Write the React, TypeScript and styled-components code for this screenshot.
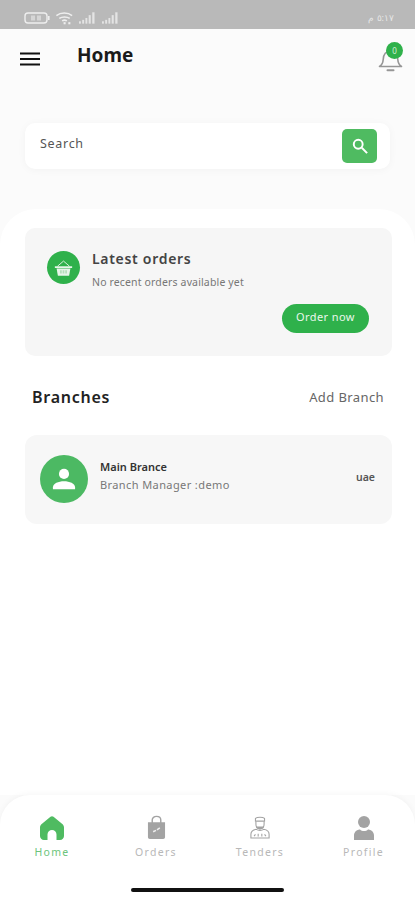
import styled, { createGlobalStyle } from "styled-components";

const GlobalStyle = createGlobalStyle`
  html, body {
    margin: 0;
    padding: 0;
    background: #fbfbfb;
    font-family: "Noto Sans", "Liberation Sans", sans-serif;
  }

  * {
    box-sizing: border-box;
  }
`;

const BatteryIcon = () => (
  <svg width="26" height="14" viewBox="0 0 26 14" fill="none">
    <rect x="1" y="2" width="22" height="10" rx="3" stroke="#eee" strokeWidth="1.4" />
    <rect x="24" y="5" width="1.6" height="4" fill="#eee" />
    <rect x="7" y="4.5" width="4" height="5" fill="#d6d6d6" />
    <rect x="13" y="4.5" width="4" height="5" fill="#d6d6d6" />
  </svg>
);

const WifiIcon = () => (
  <svg width="19" height="14" viewBox="0 0 20 14" fill="none" stroke="#eee" strokeWidth="1.6">
    <path d="M1.5 4.5C6 .8 13.5 .8 18 4.5" />
    <path d="M4.5 7.5c3-2.2 8-2.2 11 0" />
    <path d="M7.5 10c1.5-.9 3.500-.9 5 0" />
    <rect x="9" y="11.4" width="2.2" height="2.2" fill="#eee" stroke="none" />
    <rect x="14" y="11.4" width="2.2" height="2.2" fill="#eee" stroke="none" />
  </svg>
);

const SignalIcon = () => (
  <svg width="18" height="13" viewBox="0 0 19 13" fill="#e4e4e4">
    <rect x="0" y="10.5" width="2" height="2.5" />
    <rect x="3.4" y="9" width="2" height="4" />
    <rect x="6.8" y="7" width="2" height="6" />
    <rect x="10.2" y="4" width="2.2" height="9" />
    <rect x="14" y="1" width="2.4" height="12" />
  </svg>
);

const MenuIcon = () => (
  <svg width="20" height="14" viewBox="0 0 20 14" fill="none" stroke="#111" strokeWidth="2">
    <path d="M0 1.5h20M0 7h20M0 12.500h20" />
  </svg>
);

const BellIcon = () => (
  <svg width="25" height="26" viewBox="0 0 25 26" fill="none" stroke="#969696" strokeWidth="1.600">
    <path d="M1.500 20.500c2.500-1.700 3.500-3.600 3.700-7 .2-5 3-8.500 7.300-8.500s7.100 3.500 7.300 8.500c.2 3.400 1.200 5.300 3.700 7z" strokeLinejoin="round" />
    <path d="M9.500 24.200h6" strokeLinecap="round" strokeWidth="2" />
  </svg>
);

const SearchIcon = () => (
  <svg width="16" height="16" viewBox="0 0 18 18" fill="none" stroke="#fff" strokeWidth="2.200">
    <circle cx="7" cy="7" r="5" />
    <path d="M11 11l6 6" />
  </svg>
);

const BasketIcon = () => (
  <svg width="19" height="18" viewBox="0 0 22 20" fill="none">
    <path d="M4 8l7-6 7 6" stroke="#dff1e2" strokeWidth="1.100" />
    <path d="M1 8h20v2H1z" fill="#e8f5ea" />
    <path d="M3 10.500h16L17.500 19h-13z" fill="#e8f5ea" />
    <path d="M7 12.500h2v4H7zM10 12.500h2v4h-2zM13 12.500h2v4h-2z" fill="#b5dfbc" />
  </svg>
);

const PersonIcon = () => (
  <svg width="24" height="26" viewBox="0 0 26 26" fill="#fff">
    <circle cx="13" cy="7.500" r="5.500" />
    <path d="M1 24v-2C1 18 7 15.500 13 15.500S25 18 25 22v2z" />
  </svg>
);

const HomeIcon = () => (
  <svg width="24" height="24" viewBox="0 0 24 24" fill="#4fbb61">
    <path d="M10.500.7c.9-.7 2.100-.7 3 0l8.500 7c1.300 1 2 2.300 2 3.800V20c0 2.300-1.700 4-4 4h-3.500v-5.500a4.500 4.500 0 0 0-9 0V24H4c-2.300 0-4-1.700-4-4v-8.500c0-1.500.7-2.800 2-3.800z" />
  </svg>
);

const BagIcon = () => (
  <svg width="19" height="25" viewBox="0 0 20 25" fill="none">
    <path d="M1 7h18v15.500c0 1.200-.8 2-2 2H3c-1.200 0-2-.8-2-2z" fill="#a3a3a3" />
    <path d="M5.500 10V4.500C5.500 2.300 7.500.8 10 .8s4.500 1.500 4.500 3.700V10" stroke="#a3a3a3" strokeWidth="1.500" />
    <path d="M6.500 17l3-1.500M10.500 15l3-2" stroke="#eee" strokeWidth="1.600" />
  </svg>
);

const ChefIcon = () => (
  <svg width="20" height="25" viewBox="0 0 22 25" fill="none" stroke="#a3a3a3" strokeWidth="1.200">
    <path d="M6 5.500V2.500C8 .8 14 .8 16 2.500v3z" />
    <path d="M6.500 6v3c0 3 2 5 4.500 5s4.500-2 4.500-5V6" />
    <path d="M1 24v-4c0-3 3-5 6-5.500 2 1.500 6 1.500 8 0 3 .5 6 2.500 6 5.500v4z" />
    <path d="M6 20l-1.500 2M9 19.500v3M13 19.500v3M16 20l1.500 2" />
    <path d="M7 11.500c1 3 7 3 8 0" fill="#a3a3a3" />
  </svg>
);

const ProfileIcon = () => (
  <svg width="20" height="24" viewBox="0 0 20 24" fill="#a3a3a3">
    <circle cx="10" cy="6" r="6" />
    <path d="M0 24v-4.500C0 15.500 3.500 13.500 6 13.500c1 1 2.500 1.500 4 1.500s3-.5 4-1.500c2.500 0 6 2 6 6V24z" />
  </svg>
);

const navItems = [
  { label: "Home", icon: <HomeIcon />, active: true },
  { label: "Orders", icon: <BagIcon />, active: false },
  { label: "Tenders", icon: <ChefIcon />, active: false },
  { label: "Profile", icon: <ProfileIcon />, active: false },
];

const App = () => {
  return (
    <Page>
      <GlobalStyle />
      <StatusBar>
        <StatusIcons>
          <BatteryIcon />
          <WifiIcon />
          <SignalIcon />
          <SignalIcon />
        </StatusIcons>
        <StatusTime dir="rtl">٥:١٧ م</StatusTime>
      </StatusBar>

      <Header>
        <MenuButton>
          <MenuIcon />
        </MenuButton>
        <Title>Home</Title>
        <BellWrap>
          <BellIcon />
          <Badge>0</Badge>
        </BellWrap>
      </Header>

      <SearchBar>
        <SearchLabel>Search</SearchLabel>
        <SearchButton>
          <SearchIcon />
        </SearchButton>
      </SearchBar>

      <Sheet>
        <OrdersCard>
          <OrdersRow>
            <BasketCircle>
              <BasketIcon />
            </BasketCircle>
            <OrdersCopy>
              <OrdersTitle>Latest orders</OrdersTitle>
              <OrdersText>No recent orders available yet</OrdersText>
            </OrdersCopy>
          </OrdersRow>
          <OrderButton>Order now</OrderButton>
        </OrdersCard>

        <SectionRow>
          <SectionTitle>Branches</SectionTitle>
          <SectionLink>Add Branch</SectionLink>
        </SectionRow>

        <BranchCard>
          <Avatar>
            <PersonIcon />
          </Avatar>
          <BranchInfo>
            <BranchName>Main Brance</BranchName>
            <BranchManager>Branch Manager :demo</BranchManager>
          </BranchInfo>
          <BranchCountry>uae</BranchCountry>
        </BranchCard>
      </Sheet>

      <BottomNav>
        <NavRow>
          {navItems.map((item) => (
            <NavItem key={item.label}>
              <NavIcon>{item.icon}</NavIcon>
              <NavLabel $active={item.active}>{item.label}</NavLabel>
            </NavItem>
          ))}
        </NavRow>
        <HomeIndicator />
      </BottomNav>
    </Page>
  );
};

const Page = styled.div`
  width: 415px;
  height: 900px;
  overflow: hidden;

  background-color: #fbfbfb;

  display: flex;
  flex-direction: column;
`;

const StatusBar = styled.div`
  height: 29px;
  flex-shrink: 0;
  padding: 6px 21px 0 24px;

  background-color: #b9b9b9;

  display: flex;
  align-items: center;
  justify-content: space-between;
`;

const StatusIcons = styled.div`
  display: flex;
  align-items: center;
  gap: 5px;
`;

const StatusTime = styled.span`
  font-size: 9px;
  color: #e6e6e6;
`;

const Header = styled.div`
  height: 54px;
  flex-shrink: 0;
  padding: 0 12px 0 20px;

  display: flex;
  align-items: center;
`;

const MenuButton = styled.div`
  width: 20px;
  height: 14px;
  margin-top: 6px;

  display: flex;
`;

const Title = styled.h1`
  margin: 0 0 3px 37px;

  font-size: 19px;
  font-weight: 700;
  color: #1a1a1a;
`;

const BellWrap = styled.div`
  position: relative;
  margin: 6px 0 0 auto;
  width: 25px;
  height: 26px;
`;

const Badge = styled.span`
  position: absolute;
  top: -4px;
  right: 0;
  width: 17px;
  height: 17px;
  border-radius: 50%;

  background-color: #2fb14b;
  color: #d5efda;

  font-size: 8px;
  line-height: 17px;
  text-align: center;
`;

const SearchBar = styled.div`
  width: 365px;
  height: 46px;
  flex-shrink: 0;
  margin: 40px 0 0 25px;
  padding: 0 13px 0 15px;
  border-radius: 10px;

  background-color: #fff;
  box-shadow: 0 1px 8px rgba(0, 0, 0, 0.04);

  display: flex;
  align-items: center;
  justify-content: space-between;
`;

const SearchLabel = styled.span`
  margin-bottom: 6px;

  font-size: 12.5px;
  letter-spacing: 0.7px;
  color: #555;
`;

const SearchButton = styled.div`
  width: 35px;
  height: 34px;
  border-radius: 5px;

  background-color: #4fbb61;

  display: flex;
  align-items: center;
  justify-content: center;
`;

const Sheet = styled.div`
  flex: 1;
  margin-top: 40px;
  padding: 19px 23px 0 25px;
  border-radius: 36px 36px 0 0;

  background-color: #fff;
`;

const OrdersCard = styled.div`
  height: 128px;
  padding: 23px 23px 0 22px;
  border-radius: 10px;

  background-color: #f6f6f6;

  display: flex;
  flex-direction: column;
`;

const OrdersRow = styled.div`
  display: flex;
  gap: 12px;
`;

const BasketCircle = styled.div`
  width: 33px;
  height: 33px;
  border-radius: 50%;

  background-color: #2fb14b;

  display: flex;
  align-items: center;
  justify-content: center;
`;

const OrdersCopy = styled.div`
  margin-top: -1px;
`;

const OrdersTitle = styled.div`
  font-size: 14px;
  line-height: 18px;
  font-weight: 600;
  letter-spacing: 0.7px;
  color: #444;
`;

const OrdersText = styled.div`
  margin-top: 7px;

  font-size: 10.5px;
  line-height: 14px;
  letter-spacing: 0.15px;
  color: #777;
`;

const OrderButton = styled.div`
  align-self: flex-end;
  width: 87px;
  height: 29px;
  margin-top: 15px;
  border-radius: 15px;

  background-color: #2fb14b;
  color: #eaf7ec;

  font-size: 11px;
  line-height: 25px;
  letter-spacing: 0.4px;
  text-align: center;
`;

const SectionRow = styled.div`
  margin-top: 30px;
  padding: 0 8px 0 7px;

  display: flex;
  align-items: center;
  justify-content: space-between;
`;

const SectionTitle = styled.div`
  font-size: 16px;
  line-height: 22px;
  font-weight: 600;
  letter-spacing: 0.75px;
  color: #222;
`;

const SectionLink = styled.div`
  font-size: 13px;
  letter-spacing: 0.4px;
  color: #666;
`;

const BranchCard = styled.div`
  height: 89px;
  margin-top: 27px;
  padding: 0 17px 0 15px;
  border-radius: 12px;

  background-color: #f7f7f7;

  display: flex;
  align-items: center;
`;

const Avatar = styled.div`
  width: 48px;
  height: 48px;
  margin-top: -1px;
  border-radius: 50%;

  background-color: #4cb963;

  display: flex;
  align-items: center;
  justify-content: center;
`;

const BranchInfo = styled.div`
  margin: -8px 0 0 12px;

  display: flex;
  flex-direction: column;
  gap: 3px;
`;

const BranchName = styled.div`
  font-size: 11px;
  line-height: 15px;
  font-weight: 600;
  color: #333;
`;

const BranchManager = styled.div`
  font-size: 11px;
  line-height: 15px;
  letter-spacing: 0.4px;
  color: #777;
`;

const BranchCountry = styled.div`
  margin: -6px 0 0 auto;

  font-size: 10.5px;
  font-weight: 600;
  color: #555;
`;

const BottomNav = styled.div`
  height: 105px;
  flex-shrink: 0;
  position: relative;
  padding-top: 20px;
  border-radius: 30px 30px 0 0;

  background-color: #fff;
  box-shadow: 0 -1px 6px rgba(0, 0, 0, 0.04);

  display: flex;
  flex-direction: column;
  align-items: center;
`;

const NavRow = styled.div`
  width: 100%;
  display: grid;
  grid-template-columns: 104px 104px 104px 103px;
`;

const NavItem = styled.div`
  display: flex;
  flex-direction: column;
  align-items: center;
`;

const NavIcon = styled.div`
  height: 25px;

  display: flex;
  align-items: center;
  justify-content: center;
`;

const NavLabel = styled.span<{ $active: boolean }>`
  margin-top: 5px;

  font-size: 10.5px;
  line-height: 14px;
  letter-spacing: 1.3px;
  color: ${({ $active }) => ($active ? "#6cc47c" : "#b8b8b8")};
`;

const HomeIndicator = styled.div`
  width: 153px;
  height: 4px;
  margin-top: 29px;
  border-radius: 2px;

  background-color: #111;
`;

export default App;
